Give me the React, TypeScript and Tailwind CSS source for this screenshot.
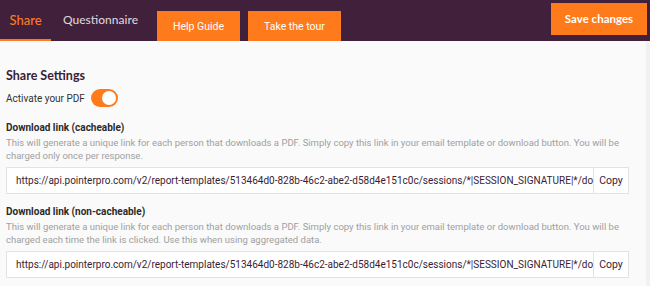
import { useState } from "react";

const URL =
  "https://api.pointerpro.com/v2/report-templates/513464d0-828b-46c2-abe2-d58d4e151c0c/sessions/*|SESSION_SIGNATURE|*/download";

const heading = { fontFamily: "Lato, 'Open Sans', sans-serif" };
const body = { fontFamily: "Roboto, 'Liberation Sans', sans-serif" };

function LinkField({ value }: { value: string }) {
  return (
    <div className="flex h-[27px] w-[623px] border border-[#e3e3e3] bg-white">
      <div className="min-w-0 flex-1 overflow-hidden whitespace-nowrap pl-[9px] pt-[6px] text-[10px] leading-[14px] text-[#3a1d35]">
        {value}
      </div>
      <button className="w-[35px] shrink-0 border-l border-[#e3e3e3] text-[10.5px] text-[#3a1d35]">
        Copy
      </button>
    </div>
  );
}

export default function App() {
  const [active, setActive] = useState(true);

  return (
    <div className="h-[286px] w-[650px] overflow-hidden bg-[#fafafa]" style={body}>
      {/* Top bar */}
      <nav className="flex h-[41px] items-stretch bg-[#41203b]">
        <div className="flex items-stretch" style={heading}>
          <button className="w-[51px] border-b-2 border-[#fe7a1b] pt-[3px] text-[13px] font-medium text-[#fe7a1b]">
            Share
          </button>
          <button className="ml-[12px] pb-[2px] text-[12px] font-medium text-[#d9d2d8]">
            Questionnaire
          </button>
        </div>
        <div className="ml-[19px] flex items-end gap-[8px]">
          <button className="h-[30px] w-[83px] bg-[#fe7a1b] pt-[1px] text-[10.5px] text-white">
            Help Guide
          </button>
          <button className="h-[30px] w-[93px] bg-[#fe7a1b] pt-[1px] text-[10.5px] text-white">
            Take the tour
          </button>
        </div>
        <div className="ml-auto mr-[3px] pt-[3px]">
          <button
            className="h-[32px] w-[96px] bg-[#fe7a1b] text-[11.5px] font-bold text-white"
            style={heading}
          >
            Save changes
          </button>
        </div>
      </nav>

      <div className="flex">
        <main className="w-[646px] pl-[6px] pt-[27px]">
          <h2 className="text-[12.5px] font-bold leading-[15px] text-[#3a1d35]" style={heading}>
            Share Settings
          </h2>

          <div className="mt-[6px] flex items-center gap-[6px]">
            <span className="text-[10px] text-[#333]">Activate your PDF</span>
            <button
              onClick={() => setActive((v) => !v)}
              className="flex h-[18px] w-[27px] items-center rounded-full bg-[#fe7a1b] px-[2px]"
            >
              <span
                className={
                  active
                    ? "ml-auto h-[14px] w-[14px] rounded-full bg-white"
                    : "h-[14px] w-[14px] rounded-full bg-white"
                }
              />
            </button>
          </div>

          <h3 className="mt-[14px] text-[10px] font-bold leading-[13px] text-[#2a2a2a]">
            Download link (cacheable)
          </h3>
          <p className="mt-[2px] whitespace-nowrap text-[9.5px] leading-[13px] text-[#a0a0a0]">
            This will generate a unique link for each person that downloads a PDF. Simply copy this link in
            your email template or download button. You will be
            <br />
            charged only once per response.
          </p>
          <div className="mt-[5px]">
            <LinkField value={URL} />
          </div>

          <h3 className="mt-[11px] text-[10px] font-bold leading-[13px] text-[#2a2a2a]">
            Download link (non-cacheable)
          </h3>
          <p className="mt-[2px] whitespace-nowrap text-[9.5px] leading-[13px] text-[#a0a0a0]">
            This will generate a unique link for each person that downloads a PDF. Simply copy this link in
            your email template or download button. You will be
            <br />
            charged each time the link is clicked. Use this when using aggregated data.
          </p>
          <div className="mt-[5px]">
            <LinkField value={URL} />
          </div>
        </main>
        <div className="h-[245px] flex-1 bg-[#f1f1f1]" />
      </div>
    </div>
  );
}
